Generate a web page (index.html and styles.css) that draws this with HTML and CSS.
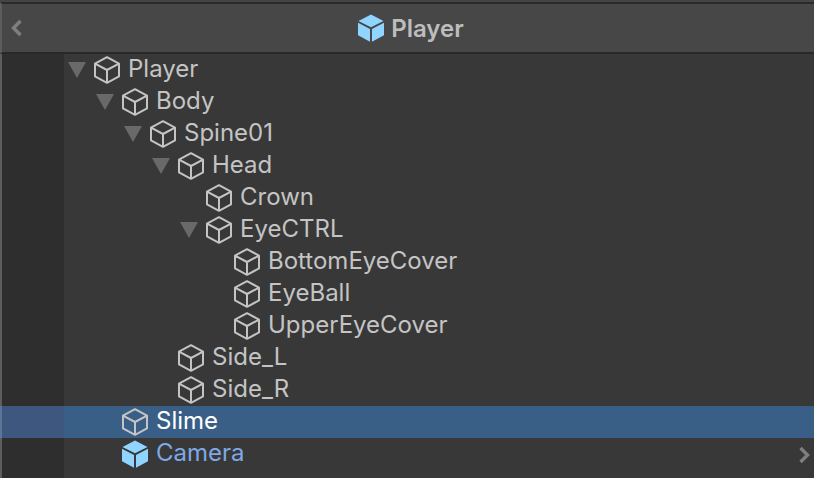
FILE: index.html
```html
<!DOCTYPE html>
<html lang="en">
<head>
  <meta charset="UTF-8">
  <meta name="viewport" content="width=device-width, initial-scale=1">
  <title>Player</title>
  <link rel="stylesheet" href="styles.css">
</head>
<body>
  <svg class="defs" width="0" height="0">
    <symbol id="cube" viewBox="0 0 26 28">
      <path d="M13 1.2 25 7.6V20.4L13 26.8 1 20.4V7.6ZM1 7.6 13 14 25 7.6M13 14V26.8" fill="none" stroke="currentColor" stroke-width="2" stroke-linejoin="round"/>
    </symbol>
    <symbol id="cube-solid" viewBox="0 0 26 28">
      <path d="M13 .5 25.5 7 13 13.2.5 7Z" fill="#8fd5ff"/>
      <path d="M0 8.8 12 15V27.8L0 21.2Z" fill="#8fd5ff"/>
      <path d="M26 8.8 14 15V27.8L26 21.2Z" fill="#8fd5ff"/>
    </symbol>
    <symbol id="arrow" viewBox="0 0 18 16">
      <path d="M0 0H18L9 16Z" fill="#696969"/>
    </symbol>
  </svg>

  <div class="window">
    <header class="titlebar">
      <svg class="back" viewBox="0 0 12 18"><path d="M9.5 2 2.5 9 9.5 16" fill="none" stroke="currentColor" stroke-width="3.4"/></svg>
      <div class="title">
        <svg class="cube"><use href="#cube-solid"/></svg>
        <span>Player</span>
      </div>
    </header>

    <div class="tree">
      <div class="row depth-0"><span class="gutter"></span><svg class="fold"><use href="#arrow"/></svg><svg class="cube"><use href="#cube"/></svg><span class="name">Player</span></div>
      <div class="row depth-1"><span class="gutter"></span><svg class="fold"><use href="#arrow"/></svg><svg class="cube"><use href="#cube"/></svg><span class="name">Body</span></div>
      <div class="row depth-2"><span class="gutter"></span><svg class="fold"><use href="#arrow"/></svg><svg class="cube"><use href="#cube"/></svg><span class="name">Spine01</span></div>
      <div class="row depth-3"><span class="gutter"></span><svg class="fold"><use href="#arrow"/></svg><svg class="cube"><use href="#cube"/></svg><span class="name">Head</span></div>
      <div class="row depth-4"><span class="gutter"></span><span class="fold"></span><svg class="cube"><use href="#cube"/></svg><span class="name">Crown</span></div>
      <div class="row depth-4"><span class="gutter"></span><svg class="fold"><use href="#arrow"/></svg><svg class="cube"><use href="#cube"/></svg><span class="name">EyeCTRL</span></div>
      <div class="row depth-5"><span class="gutter"></span><span class="fold"></span><svg class="cube"><use href="#cube"/></svg><span class="name">BottomEyeCover</span></div>
      <div class="row depth-5"><span class="gutter"></span><span class="fold"></span><svg class="cube"><use href="#cube"/></svg><span class="name">EyeBall</span></div>
      <div class="row depth-5"><span class="gutter"></span><span class="fold"></span><svg class="cube"><use href="#cube"/></svg><span class="name">UpperEyeCover</span></div>
      <div class="row depth-3"><span class="gutter"></span><span class="fold"></span><svg class="cube"><use href="#cube"/></svg><span class="name">Side_L</span></div>
      <div class="row depth-3"><span class="gutter"></span><span class="fold"></span><svg class="cube"><use href="#cube"/></svg><span class="name">Side_R</span></div>
      <div class="row depth-1 selected"><span class="gutter"></span><span class="fold"></span><svg class="cube"><use href="#cube"/></svg><span class="name">Slime</span></div>
      <div class="row depth-1 prefab"><span class="gutter"></span><span class="fold"></span><svg class="cube"><use href="#cube-solid"/></svg><span class="name">Camera</span>
        <svg class="more" viewBox="0 0 12 18"><path d="M2.5 2 9.5 9 2.5 16" fill="none" stroke="currentColor" stroke-width="3.4"/></svg>
      </div>
      <div class="row filler"><span class="gutter"></span></div>
    </div>
  </div>
</body>
</html>
```

FILE: styles.css
```css
html, body {
  margin: 0;
  height: 100%;
  overflow: hidden;
}

body {
  font-family: Inter, "Liberation Sans", sans-serif;
  background: #383838;
  color: #c4c4c4;
}

.defs {
  display: block;
  height: 0;
}

.window {
  height: 478px;
  box-sizing: border-box;
  border-top: 2px solid #444;
  display: flex;
  flex-direction: column;
}

.titlebar {
  height: 48px;
  padding-left: 6px;
  border-top: 2px solid #2a2a2a;
  border-bottom: 2px solid #282828;
  border-left: 2px solid #5d5d5d;
  background: #474747;
  display: flex;
  align-items: center;
  justify-content: center;
  position: relative;
}

.back {
  position: absolute;
  left: 9px;
  top: 15px;
  width: 12px;
  height: 18px;
  color: #7f7f7f;
}

.title {
  display: flex;
  align-items: center;
  gap: 7px;
  font-size: 24px;
  font-weight: 600;
  color: #bdbdbd;
}

.tree {
  flex: 1;
  overflow: hidden;
}

.row {
  height: 32px;
  display: flex;
  align-items: center;
  font-size: 24px;
  color: #c4c4c4;
}

.filler {
  height: 8px;
}

.gutter {
  width: 64px;
  height: 100%;
  flex: none;
  box-sizing: border-box;
  border-left: 2px solid #5d5d5d;
  background: #2e2e2e;
}

.fold {
  width: 18px;
  height: 16px;
  flex: none;
  margin-right: 8px;
}

.depth-0 .fold { margin-left: 4px; }
.depth-1 .fold { margin-left: 32px; }
.depth-2 .fold { margin-left: 60px; }
.depth-3 .fold { margin-left: 88px; }
.depth-4 .fold { margin-left: 116px; }
.depth-5 .fold { margin-left: 144px; }

.cube {
  width: 26px;
  height: 28px;
  flex: none;
}

.row .cube {
  margin-right: 8px;
}

.name {
  margin-bottom: 4px;
}

.selected {
  background: #3a5f87;
  color: #fff;
}

.selected .gutter {
  background: #3e577f;
  border-left-color: #5f7596;
}

.selected .cube {
  color: #c4c4c4;
}

.prefab {
  color: #7fa8e6;
}

.more {
  width: 12px;
  height: 18px;
  margin-left: auto;
  margin-right: 4px;
  margin-top: 2px;
  color: #7f7f7f;
}
```
